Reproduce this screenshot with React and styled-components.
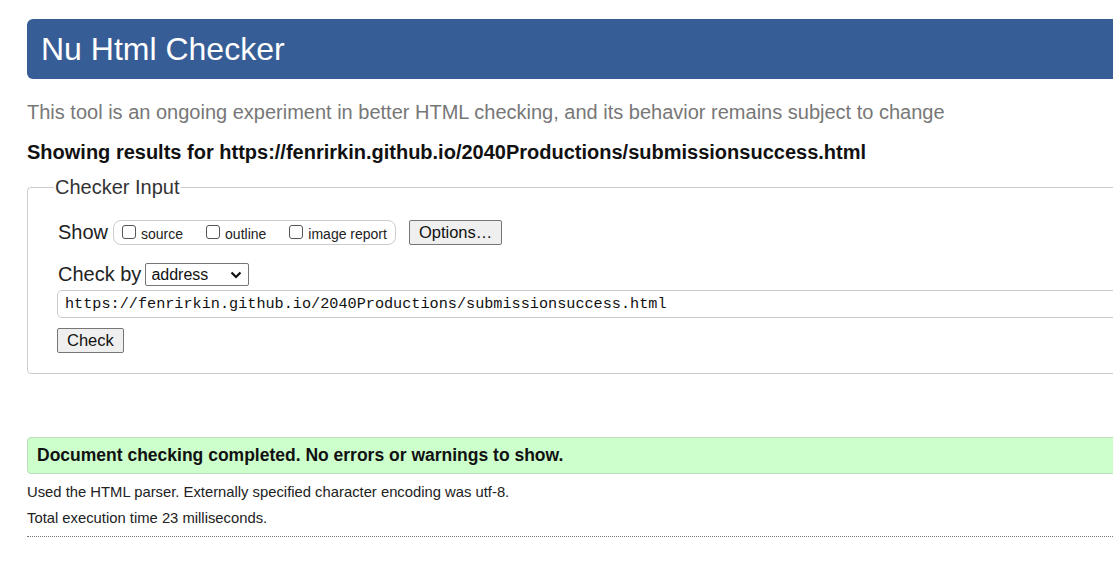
import React from "react";
import styled, { createGlobalStyle } from "styled-components";

const GlobalStyle = createGlobalStyle`
  html, body {
    margin: 0;
    padding: 0;
    background: #ffffff;
    overflow: hidden;
  }
  body {
    font-family: "Liberation Sans", Arial, sans-serif;
    color: #111;
  }
`;

const URL = "https://fenrirkin.github.io/2040Productions/submissionsuccess.html";

const App = () => {
  return (
    <Page>
      <GlobalStyle />
      <Header>
        <HeaderTitle>Nu Html Checker</HeaderTitle>
      </Header>

      <Intro>
        This tool is an ongoing experiment in better HTML checking, and its
        behavior remains subject to change
      </Intro>
      <ResultsFor>Showing results for {URL}</ResultsFor>

      <InputSet>
        <Legend>Checker Input</Legend>

        <Row>
          <RowLabel>Show</RowLabel>
          <OptionGroup>
            <CheckItem>
              <Box />
              source
            </CheckItem>
            <CheckItem>
              <Box />
              outline
            </CheckItem>
            <CheckItem>
              <Box />
              image report
            </CheckItem>
          </OptionGroup>
          <Button>Options…</Button>
        </Row>

        <Row $top={18}>
          <RowLabel>Check by</RowLabel>
          <Select>
            <span>address</span>
            <svg width="12" height="8" viewBox="0 0 12 8">
              <path
                d="M1.5 1.5 L6 6 L10.5 1.5"
                fill="none"
                stroke="#111"
                strokeWidth="2.2"
              />
            </svg>
          </Select>
        </Row>

        <UrlField>{URL}</UrlField>

        <Button $top={10}>Check</Button>
      </InputSet>

      <SuccessBox>Document checking completed. No errors or warnings to show.</SuccessBox>
      <Details>Used the HTML parser. Externally specified character encoding was utf-8.</Details>
      <Details $top={9}>Total execution time 23 milliseconds.</Details>
      <DottedRule />
    </Page>
  );
};

export default App;

/* ---------------- Styled Components ---------------- */

const Page = styled.div`
  width: 1110px;
  padding: 19px 0 0 27px;
`;

const Header = styled.div`
  background: #365d95;
  border-radius: 6px;
  height: 60px;
  display: flex;
  align-items: center;
  padding-left: 14px;
`;

const HeaderTitle = styled.h1`
  margin: 0;
  font-size: 32px;
  font-weight: normal;
  color: #ffffff;
  line-height: 1;
`;

const Intro = styled.p`
  margin: 22px 0 0;
  font-size: 20px;
  line-height: 23px;
  color: #777777;
`;

const ResultsFor = styled.p`
  margin: 17px 0 0;
  font-size: 20px;
  line-height: 23px;
  font-weight: bold;
  color: #111;
`;

const InputSet = styled.fieldset`
  margin: 12px 0 0;
  border: 1px solid #cccccc;
  border-radius: 4px;
  padding: 21px 0 20px 29px;
  box-sizing: border-box;
`;

const Legend = styled.legend`
  font-size: 20px;
  line-height: 23px;
  color: #333333;
  padding: 0 1px;
  margin-left: -3px;
`;

const Row = styled.div`
  display: flex;
  align-items: center;
  gap: 4px;
  margin-top: ${(p) => p.$top || 0}px;
`;

const RowLabel = styled.span`
  font-size: 20px;
  color: #222;
  margin-left: 1px;
  margin-right: 2px;
`;

const OptionGroup = styled.div`
  display: flex;
  align-items: center;
  gap: 23px;
  border: 1px solid #cccccc;
  border-radius: 8px;
  height: 23px;
  padding: 0 8px 0 8px;
  margin-left: -1px;
  margin-right: 9px;
`;

const CheckItem = styled.label`
  display: flex;
  align-items: center;
  gap: 5px;
  font-size: 14px;
  color: #222;
  padding-top: 2px;
`;

const Box = styled.span`
  width: 12px;
  height: 12px;
  border: 1px solid #555;
  border-radius: 3px;
  background: #fff;
  margin-top: -4px;
`;

const Button = styled.div`
  display: inline-flex;
  align-items: center;
  justify-content: center;
  box-sizing: border-box;
  height: 25px;
  padding: 0 9px;
  margin-top: ${(p) => p.$top || 0}px;
  background: #efefef;
  border: 1px solid #767676;
  border-radius: 2px;
  font-size: 16.5px;
  color: #111;
  width: fit-content;
`;

const Select = styled.div`
  display: flex;
  align-items: center;
  justify-content: space-between;
  box-sizing: border-box;
  width: 104px;
  height: 23px;
  margin-left: -2px;
  padding: 0 6px 0 5px;
  border: 1px solid #767676;
  border-radius: 2px;
  font-size: 16px;
  color: #111;
`;

const UrlField = styled.div`
  margin-top: 4px;
  box-sizing: border-box;
  height: 28px;
  display: flex;
  align-items: center;
  padding-left: 7px;
  border: 1px solid #cccccc;
  border-radius: 5px;
  font-family: "Liberation Mono", "DejaVu Sans Mono", monospace;
  font-size: 15.2px;
  color: #111;
`;

const SuccessBox = styled.div`
  margin-top: 63px;
  box-sizing: border-box;
  height: 37px;
  display: flex;
  align-items: center;
  padding-left: 9px;
  background: #ccffcc;
  border: 1px solid #bbddbb;
  border-radius: 4px;
  font-size: 17.5px;
  font-weight: bold;
  color: #111;
`;

const Details = styled.p`
  margin: ${(p) => (p.$top != null ? p.$top : 10)}px 0 0;
  font-size: 14.8px;
  line-height: 17px;
  color: #222;
`;

const DottedRule = styled.hr`
  margin: 9px 0 0;
  border: 0;
  border-top: 1px dotted #777;
`;
